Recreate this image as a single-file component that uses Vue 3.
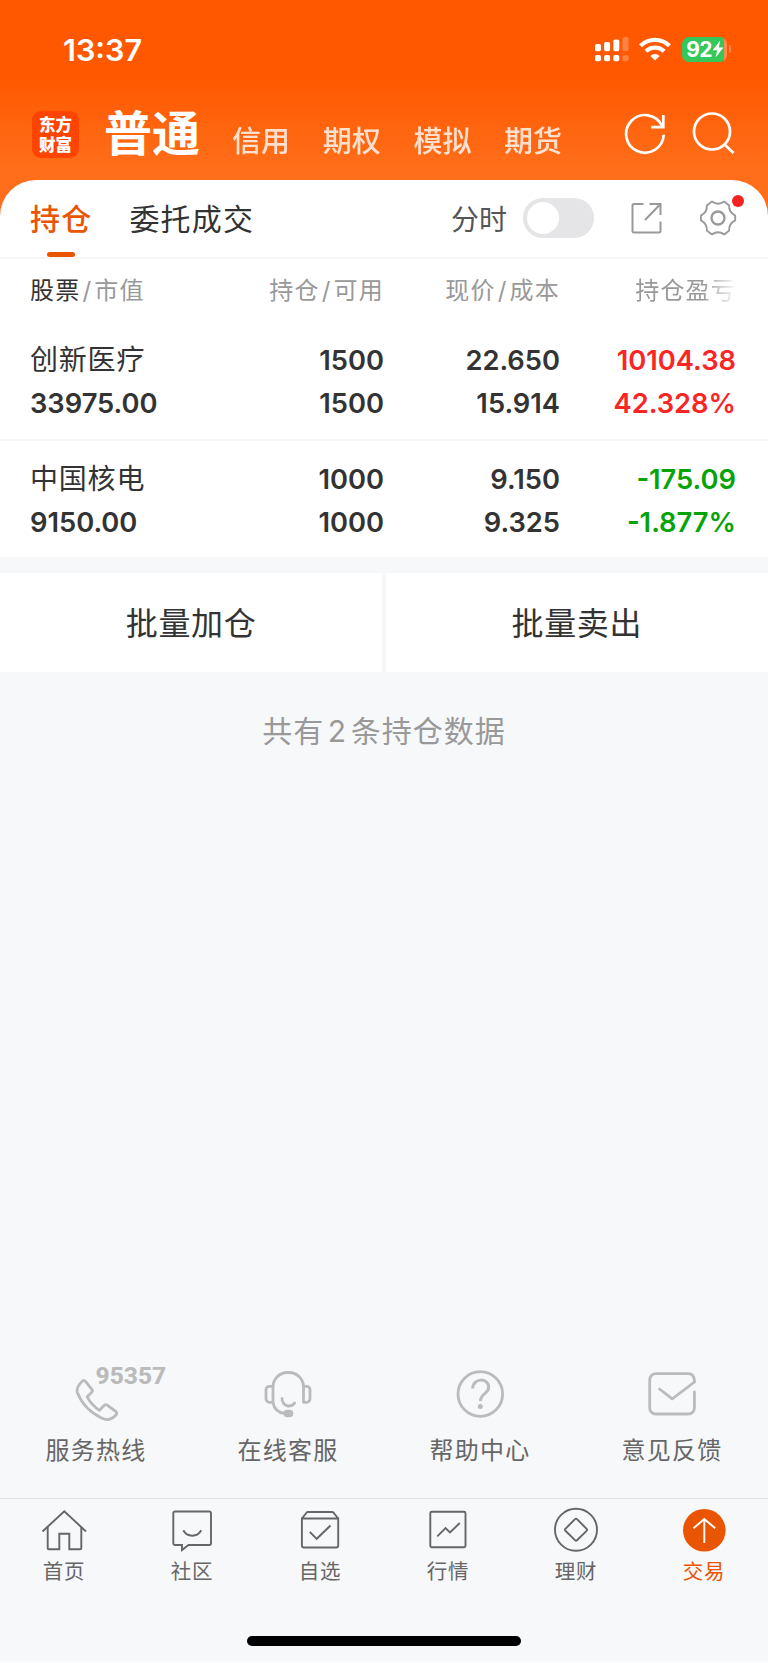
<script setup>
import { ref } from 'vue'

const markets = ['信用', '期权', '模拟', '期货']
const timeline = ref(false)
const activeTab = ref('交易')

const stocks = [
  {
    name: '创新医疗',
    value: '33975.00',
    hold: '1500',
    usable: '1500',
    price: '22.650',
    cost: '15.914',
    profit: '10104.38',
    rate: '42.328%',
  },
  {
    name: '中国核电',
    value: '9150.00',
    hold: '1000',
    usable: '1000',
    price: '9.150',
    cost: '9.325',
    profit: '-175.09',
    rate: '-1.877%',
  },
]

const tabs = ['首页', '社区', '自选', '行情', '理财', '交易']

function trend(stock) {
  return stock.profit.startsWith('-') ? 'down' : 'up'
}
</script>

<template>
  <div class="page">
    <header class="top">
      <div class="status">
        <span class="clock">13:37</span>
        <svg class="signal" width="36" height="26" viewBox="0 0 36 26" fill="#fff">
          <rect x="1" y="8" width="6" height="7.2" rx="1.8" />
          <rect x="10.1" y="6" width="6" height="9.2" rx="1.8" />
          <rect x="19.3" y="3.4" width="6" height="11.8" rx="1.8" />
          <rect x="1" y="19" width="6" height="6.2" rx="1.8" />
          <rect x="10.1" y="19" width="6" height="6.2" rx="1.8" />
          <rect x="19.3" y="19" width="6" height="6.2" rx="1.8" />
          <g opacity="0.25">
            <rect x="28.5" y="1" width="6" height="14.2" rx="1.8" />
            <rect x="28.5" y="19" width="6" height="6.2" rx="1.8" />
          </g>
        </svg>
        <svg class="wifi" width="32" height="24" viewBox="0 0 32 24">
          <g fill="none" stroke="#fff" stroke-width="4.2">
            <path d="M1.5 8.8a20.6 20.6 0 0 1 29 0" />
            <path d="M6.900 14.300a13 13 0 0 1 18.200 0" />
          </g>
          <path d="M16 23.600l-4.600-4.700a6.600 6.600 0 0 1 9.200 0z" fill="#fff" />
        </svg>
        <div class="battery">
          <span>92</span>
          <svg width="12" height="18" viewBox="0 0 12 18">
            <path d="M8.200 0.500L0.600 10.200h4.600L3.600 17.500l7.800-10H6.800z" fill="#fff" />
          </svg>
        </div>
        <i class="battery-tip"></i>
      </div>
      <div class="nav">
        <div class="logo"><span>东方</span><span>财富</span></div>
        <h1>普通</h1>
        <span v-for="m in markets" :key="m" class="market">{{ m }}</span>
        <svg class="nav-icon refresh" width="44" height="44" viewBox="0 0 44 44" fill="none" stroke="#fff" stroke-width="2.7">
          <path d="M40.700 22.800A18.800 18.800 0 1 1 39 14" />
          <path d="M40.300 3v12.200H28.300" />
        </svg>
        <svg class="nav-icon" width="44" height="44" viewBox="0 0 44 44" fill="none" stroke="#fff" stroke-width="2.7">
          <circle cx="20" cy="19.500" r="18" />
          <path d="M32.300 32.300l9.200 8.800" />
        </svg>
      </div>
    </header>

    <main>
      <section class="card">
        <div class="toolbar">
          <span class="tool-tab on">持仓</span>
          <span class="tool-tab">委托成交</span>
          <span class="switch-label">分时</span>
          <button class="switch" :class="{ checked: timeline }" @click="timeline = !timeline"><i></i></button>
          <svg class="share" width="32" height="32" viewBox="0 0 32 32" fill="none" stroke="#999" stroke-width="2">
            <path d="M12.500 2H3A1.500 1.500 0 0 0 1.500 3.500v25.500A1.500 1.500 0 0 0 3 30.500h25a1.500 1.500 0 0 0 1.500-1.500V19.500" />
            <path d="M18.500 2H29.500v11M29.500 2L14 18" />
          </svg>
          <div class="settings">
            <svg width="38" height="38" viewBox="0 0 38 38" fill="none" stroke="#999" stroke-width="1.900">
              <path d="M13 2.600Q19 7 25.200 2.600L30.200 6.400Q29.500 13 36.200 16.600V21.400Q29.500 25 30.200 31.600L25.200 35.400Q19 31.200 13 35.400L7.800 31.600Q8.500 25 1.900 21.400V16.600Q8.500 13 7.800 6.400Z" stroke-linejoin="round" />
              <circle cx="19" cy="19" r="6.500" stroke-width="2.300" />
            </svg>
            <i class="dot"></i>
          </div>
        </div>

        <div class="grid head">
          <span><b>股票</b><em>/</em>市值</span>
          <span>持仓<em>/</em>可用</span>
          <span>现价<em>/</em>成本</span>
          <span class="fade">持仓盈亏</span>
        </div>
        <div v-for="s in stocks" :key="s.name" class="grid row">
          <div><span class="name">{{ s.name }}</span><span>{{ s.value }}</span></div>
          <div><span>{{ s.hold }}</span><span>{{ s.usable }}</span></div>
          <div><span>{{ s.price }}</span><span>{{ s.cost }}</span></div>
          <div :class="trend(s)"><span>{{ s.profit }}</span><span>{{ s.rate }}</span></div>
        </div>
      </section>

      <div class="batch">
        <button>批量加仓</button>
        <button>批量卖出</button>
      </div>
      <p class="total">共有<span>{{ stocks.length }}</span>条持仓数据</p>
    </main>

    <div class="services">
      <div class="service">
        <div class="service-icon">
          <svg width="52" height="54" viewBox="0 0 52 54">
            <path d="M12.300 13.200Q14 11.500 15.500 13.300L22 21.600Q23 23 21.800 24.200L17.200 28.800Q21.500 37 29.500 42.300L34.300 37.300Q35.600 36 37.200 37.200L45.800 43.500Q47.800 45.200 46 47Q39.500 54 32 50.300Q14 41.500 7.300 24.500Q6 19 12.300 13.200Z" />
          </svg>
          <span class="hotline">95357</span>
        </div>
        <span>服务热线</span>
      </div>
      <div class="service">
        <div class="service-icon">
          <svg width="52" height="54" viewBox="0 0 52 54">
            <path d="M11 34V19A14.500 14.500 0 0 1 25.500 4.500H27A14.500 14.500 0 0 1 41.500 19V34.300H44.500A3.500 3.500 0 0 0 48 30.800V21.800A3.500 3.500 0 0 0 44.500 18.300H41.500M11 18.300H7.500A3.500 3.500 0 0 0 4 21.800V30.800A3.500 3.500 0 0 0 7.500 34.300H11Q12.500 44.500 23 45.500" />
            <path d="M20 30.500C20.500 38 28 40.500 32.700 35" />
            <rect x="21.500" y="41.700" width="9.800" height="7.600" rx="3.700" class="solid" />
          </svg>
        </div>
        <span>在线客服</span>
      </div>
      <div class="service">
        <div class="service-icon">
          <svg width="52" height="54" viewBox="0 0 52 54">
            <circle cx="26.300" cy="26" r="22.300" />
            <path d="M18.700 20.500C18.700 9.500 34.700 9.500 34.700 19.500C34.700 25.500 26.500 25.500 26.500 33" stroke-linecap="butt" stroke-width="3" />
            <circle cx="26.300" cy="38.500" r="2.500" class="solid" />
          </svg>
        </div>
        <span>帮助中心</span>
      </div>
      <div class="service">
        <div class="service-icon">
          <svg width="52" height="54" viewBox="0 0 52 54">
            <path d="M48.400 24V40A6 6 0 0 1 42.400 46H9.700A6 6 0 0 1 3.700 40V11.700A6 6 0 0 1 9.700 5.700H42.400Q48.400 5.700 48.500 14L26.200 30.800L13.500 21" />
          </svg>
        </div>
        <span>意见反馈</span>
      </div>
    </div>

    <nav class="tabbar">
      <a v-for="t in tabs" :key="t" :class="{ active: t === activeTab }" @click="activeTab = t">
        <svg width="46" height="46" viewBox="0 0 46 46">
          <g v-if="t === '首页'">
            <path d="M1.500 24.500L23.300 4.200L45 24.500" />
            <path d="M6.700 20V41.300a1 1 0 0 0 1 1H18.300V26.800H28.300V42.300H39.300a1 1 0 0 0 1-1V20" />
          </g>
          <g v-else-if="t === '社区'">
            <path d="M6 4.500H40.300A1.700 1.700 0 0 1 42 6.200V36.300A1.700 1.700 0 0 1 40.300 38H19.500L13 43V38H6A1.700 1.700 0 0 1 4.300 36.300V6.200A1.700 1.700 0 0 1 6 4.500Z" />
            <path d="M14.300 23.300C18 30.500 28.500 30.500 32.200 23.300" />
          </g>
          <g v-else-if="t === '自选'">
            <path d="M4.900 11.500H41.200V38.500A2 2 0 0 1 39.200 40.500H6.900A2 2 0 0 1 4.900 38.500ZL9.700 5.600Q10 5 10.800 5H35Q36 5 36.500 5.600L41.200 11.500" />
            <path d="M12.800 24.800L19.700 31.800L33.500 18.500" />
          </g>
          <g v-else-if="t === '行情'">
            <rect x="5.300" y="4.700" width="35.200" height="35.600" rx="1.500" />
            <path d="M12.300 29.300L20.500 21L25 25.500L34.800 16" />
          </g>
          <g v-else-if="t === '理财'">
            <circle cx="23" cy="22.800" r="21" />
            <path d="M22 12.200Q23 11.200 24 12.200L33.600 21.800Q34.600 22.800 33.600 23.800L24 33.200Q23 34.200 22 33.200L12.400 23.800Q11.400 22.800 12.400 21.800Z" />
          </g>
          <g v-else>
            <circle cx="23.300" cy="23.300" r="21.300" fill="#ea5504" stroke="none" />
            <path d="M23.300 36V12.500M12.500 21.300L23.300 12L34.200 21.300" stroke="#fff" />
          </g>
        </svg>
        <span>{{ t }}</span>
      </a>
    </nav>
    <div class="home-bar"><i></i></div>
  </div>
</template>

<style>
body {
  margin: 0;
  background: #fff;
}
</style>

<style scoped>
.page {
  display: flex;
  flex-direction: column;
  width: 768px;
  height: 1662px;
  background: #f7f8fa;
  font-family: Inter, 'Noto Sans CJK SC', sans-serif;
  color: #333;
  overflow: hidden;
}
button {
  border: none;
  padding: 0;
  font-family: inherit;
  color: inherit;
}
.top {
  height: 232px;
  flex: none;
  background: linear-gradient(#ff5800 75px, #ff6e1a 170px);
  color: #fff;
}
.status {
  display: flex;
  align-items: center;
  height: 98px;
  padding: 0 37px 0 63px;
}
.clock {
  margin-right: auto;
  font-size: 30.500px;
  font-weight: 600;
}
.wifi {
  margin: 0 11px 0 9px;
}
.battery {
  display: flex;
  align-items: center;
  justify-content: center;
  box-sizing: border-box;
  width: 45px;
  height: 25px;
  padding: 0 2px 0 3px;
  border-radius: 7px;
  background: linear-gradient(90deg, #34c759 42px, #ff8a4d 42px);
  font-size: 21px;
  font-weight: 700;
}
.battery span {
  letter-spacing: -0.800px;
}
.battery-tip {
  width: 2.500px;
  height: 8px;
  margin-left: 1.500px;
  border-radius: 0 4px 4px 0;
  background: #ff8a4d;
}
.nav {
  display: flex;
  align-items: center;
  height: 72px;
  padding: 0 32px 0 32px;
}
.logo {
  display: flex;
  flex-direction: column;
  align-items: center;
  justify-content: center;
  width: 47px;
  height: 47px;
  border-radius: 9px;
  background: #ff4400;
  font-family: 'Noto Sans CJK SC', sans-serif;
  font-size: 16.500px;
  font-weight: 900;
  line-height: 20px;
}
h1 {
  margin: 0 32px 0 25px;
  font-size: 48px;
  font-weight: 700;
  line-height: 60px;
}
.market {
  width: 90.700px;
  padding-top: 16px;
  font-size: 29px;
  font-weight: 500;
  line-height: 40px;
  opacity: 0.8;
}
.refresh {
  margin: 0 25px 0 auto;
}
main {
  margin-top: -52.500px;
}
.card {
  border-radius: 36px 36px 0 0;
  background: #fff;
}
.toolbar {
  display: flex;
  align-items: center;
  height: 77px;
  padding: 0 31px 0 30px;
  border-bottom: 2px solid #f6f6f7;
}
.tool-tab {
  position: relative;
  height: 77px;
  margin-right: 37px;
  font-size: 30px;
  letter-spacing: 1.200px;
  line-height: 78px;
}
.tool-tab.on {
  color: #ea5504;
  font-weight: 500;
}
.tool-tab.on::after {
  content: '';
  position: absolute;
  left: 17.200px;
  bottom: -0.500px;
  width: 27.500px;
  height: 5.500px;
  border-radius: 2.500px;
  background: #ea5504;
}
.switch-label {
  margin-left: auto;
  color: #555;
  font-size: 28px;
}
.switch {
  width: 71px;
  height: 40px;
  margin: 0 37px 0 16px;
  border-radius: 20px;
  background: #e5e5e7;
}
.switch i {
  display: block;
  width: 32px;
  height: 32px;
  margin-left: 4px;
  border-radius: 50%;
  background: #fff;
}
.switch.checked i {
  margin-left: 35px;
}
.share {
  margin-right: 36px;
}
.settings {
  position: relative;
  display: flex;
}
.dot {
  position: absolute;
  top: -4.500px;
  right: -7px;
  width: 12px;
  height: 12px;
  border-radius: 50%;
  background: #f52222;
}
.grid {
  display: grid;
  grid-template-columns: 178px 176px 176px 176px;
  padding: 0 32px 0 30px;
  text-align: right;
}
.grid > :first-child {
  text-align: left;
}
.head {
  height: 62px;
  color: #999;
  font-size: 24px;
  letter-spacing: 1.200px;
  line-height: 63px;
}
.head b {
  color: #333;
  font-weight: 400;
}
.head em {
  padding: 0 2px;
  font-style: normal;
}
.fade {
  mask-image: linear-gradient(90deg, #000 142px, transparent 178px);
}
.row {
  box-sizing: border-box;
  height: 118px;
  padding-top: 18.500px;
  font-size: 27.300px;
  font-weight: 600;
  line-height: 43px;
}
.row + .row {
  padding-top: 17px;
  border-top: 2px solid #f6f6f7;
}
.row span {
  display: block;
  height: 43px;
}
.row .name {
  font-size: 28px;
  font-weight: 400;
  letter-spacing: 0.800px;
}
.up {
  color: #f92626;
}
.down {
  color: #06a306;
}
.batch {
  display: grid;
  grid-template-columns: 1fr 1fr;
  gap: 3.500px;
  margin-top: 16px;
}
.batch button {
  height: 99px;
  padding-bottom: 2px;
  background: #fff;
  font-size: 32px;
  letter-spacing: 0.700px;
}
.total {
  margin: 37px 0 0;
  color: #999;
  font-size: 30px;
  letter-spacing: 1px;
  line-height: 44px;
  text-align: center;
}
.total span {
  padding: 0 3.500px;
}
.services {
  display: grid;
  grid-template-columns: repeat(4, 1fr);
  height: 130px;
  margin-top: auto;
}
.service {
  display: flex;
  flex-direction: column;
  align-items: center;
  color: #666;
  font-size: 24px;
  letter-spacing: 1.200px;
  line-height: 57px;
}
.service-icon {
  position: relative;
  height: 54px;
}
.service-icon svg {
  display: block;
  fill: none;
  stroke: #bbb;
  stroke-width: 2.800;
  stroke-linecap: round;
  stroke-linejoin: round;
}
.service-icon .solid {
  fill: #bbb;
  stroke: none;
}
.hotline {
  position: absolute;
  left: 25.500px;
  top: -6px;
  color: #bbb;
  font-family: Roboto, sans-serif;
  font-size: 24.500px;
  font-weight: 800;
  letter-spacing: 0;
  line-height: 28px;
}
.tabbar {
  display: grid;
  grid-template-columns: repeat(6, 1fr);
  height: 120px;
  border-top: 1px solid #dfe1e4;
}
.tabbar a {
  display: flex;
  flex-direction: column;
  align-items: center;
  padding-top: 8px;
  color: #666;
  font-size: 20.500px;
  letter-spacing: 0.800px;
  line-height: 37.500px;
}
.tabbar svg {
  fill: none;
  stroke: #666;
  stroke-width: 1.900;
}
.tabbar .active {
  color: #ea5504;
}
.home-bar {
  display: flex;
  justify-content: center;
  height: 43px;
}
.home-bar i {
  width: 274px;
  height: 10px;
  margin-top: 17px;
  border-radius: 5px;
  background: #000;
}
</style>
